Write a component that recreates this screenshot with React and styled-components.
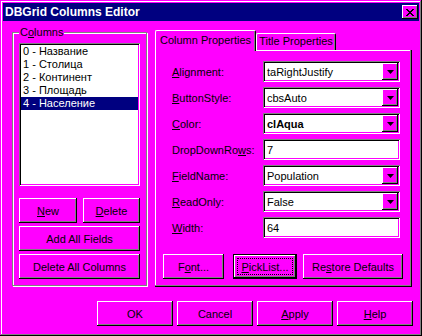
import React from 'react';
import styled, { createGlobalStyle, css } from 'styled-components';

const FACE = '#ff00ff';
const SHADOW = '#808080';
const FONT = '"Liberation Sans", Arial, sans-serif';

const Global = createGlobalStyle`
  html, body { margin: 0; padding: 0; background: ${FACE}; }
  body { font-family: ${FONT}; font-size: 11px; color: #000; }
  * { box-sizing: border-box; }
`;

const raised = css`
  box-shadow: inset -1px -1px 0 #000, inset 1px 1px 0 #fff, inset -2px -2px 0 ${SHADOW};
`;
const sunken = css`
  box-shadow: inset 1px 1px 0 ${SHADOW}, inset -1px -1px 0 #fff, inset 2px 2px 0 #000, inset -2px -2px 0 ${FACE};
`;

const Window = styled.div`
  width: 422px;
  height: 336px;
  background: ${FACE};
  padding: 3px;
  display: flex;
  flex-direction: column;
  box-shadow: inset -1px -1px 0 #000, inset 1px 1px 0 ${FACE}, inset -2px -2px 0 ${SHADOW}, inset 2px 2px 0 #fff;
`;

const TitleBar = styled.div`
  height: 18px;
  background: #000080;
  color: #fff;
  display: flex;
  align-items: center;
  justify-content: space-between;
  padding: 0 1px 0 2px;
`;

const TitleText = styled.span`
  font: bold 12px ${FONT};
  line-height: 18px;
`;

const CloseBtn = styled.div`
  width: 16px;
  height: 14px;
  background: ${FACE};
  display: flex;
  align-items: center;
  justify-content: center;
  ${raised}
`;

const Body = styled.div`
  flex: 1;
  padding: 5px 6px 0 9px;
  display: flex;
  flex-direction: column;
`;

const MainRow = styled.div`
  display: flex;
  align-items: flex-start;
  gap: 8px;
`;

const GroupBox = styled.div`
  position: relative;
  margin-top: 6px;
  width: 135px;
  height: 254px;
  border: 1px solid ${SHADOW};
  box-shadow: 1px 1px 0 #fff, inset 1px 1px 0 #fff;
  padding: 10px 6px 6px 6px;
  display: flex;
  flex-direction: column;
`;

const GroupLabel = styled.span`
  position: absolute;
  left: 6px;
  top: -8px;
  background: ${FACE};
  padding: 0 1px;
  line-height: 14px;
`;

const ListBox = styled.div`
  width: 121px;
  height: 143px;
  background: #fff;
  padding: 2px;
  ${sunken}
`;

const ListItem = styled.div`
  height: 13px;
  line-height: 13px;
  padding-left: 2px;
  white-space: nowrap;
  background: ${p => (p.$selected ? '#000080' : 'transparent')};
  color: ${p => (p.$selected ? '#fff' : '#000')};
`;

const ButtonStack = styled.div`
  margin-top: 12px;
  display: flex;
  flex-direction: column;
  gap: 3px;
`;

const ButtonPair = styled.div`
  display: flex;
  justify-content: space-between;
`;

const Button = styled.button`
  width: ${p => p.$w}px;
  height: 25px;
  margin: 0;
  padding: 0;
  border: none;
  background: ${FACE};
  font: 11px ${FONT};
  color: #000;
  display: flex;
  align-items: center;
  justify-content: center;
  ${raised}
  ${p =>
    p.$focused &&
    css`
      box-shadow: inset 0 0 0 1px #000, inset -2px -2px 0 #000, inset 2px 2px 0 #fff, inset -3px -3px 0 ${SHADOW};
    `}
`;

const FocusRing = styled.span`
  position: absolute;
  inset: 4px;
  border: 1px dotted #000;
  pointer-events: none;
`;

const FocusWrap = styled.span`
  position: relative;
  display: flex;
  align-items: center;
  justify-content: center;
  width: 100%;
  height: 100%;
`;

const Key = styled.span`
  text-decoration: underline;
  text-underline-offset: 1px;
`;

const TabControl = styled.div`
  margin-top: 4px;
  width: 257px;
  display: flex;
  flex-direction: column;
`;

const TabStrip = styled.div`
  display: flex;
  align-items: flex-end;
  height: 20px;
`;

const Tab = styled.div`
  position: relative;
  z-index: ${p => (p.$active ? 2 : 1)};
  width: ${p => p.$w}px;
  height: ${p => (p.$active ? 21 : 17)}px;
  margin-bottom: ${p => (p.$active ? -1 : 0)}px;
  background: ${FACE};
  border-top: 1px solid #fff;
  border-left: 1px solid #fff;
  border-right: 1px solid #000;
  border-radius: 2px 2px 0 0;
  box-shadow: inset -1px 0 0 ${SHADOW};
  text-align: center;
  padding-top: ${p => (p.$active ? 3 : 1)}px;
  line-height: 13px;
  white-space: nowrap;
`;

const Panel = styled.div`
  height: 237px;
  background: ${FACE};
  padding: 11px 0 0 8px;
  box-shadow: inset -1px -1px 0 #000, inset -2px -2px 0 ${SHADOW}, inset 1px 1px 0 #fff;
  display: flex;
  flex-direction: column;
`;

const FieldGrid = styled.div`
  display: grid;
  grid-template-columns: 91px 137px;
  grid-auto-rows: 21px;
  row-gap: 5px;
  padding-left: 9px;
  align-items: center;
`;

const FieldLabel = styled.span`
  white-space: nowrap;
`;

const Field = styled.div`
  width: 137px;
  height: 21px;
  background: #fff;
  padding: 2px;
  display: flex;
  align-items: center;
  ${sunken}
`;

const FieldText = styled.span`
  flex: 1;
  padding-left: 2px;
  font-weight: ${p => (p.$bold ? 'bold' : 'normal')};
  white-space: nowrap;
`;

const DropBtn = styled.div`
  width: 16px;
  height: 17px;
  background: ${FACE};
  display: flex;
  align-items: center;
  justify-content: center;
  ${raised}
`;

const PanelButtons = styled.div`
  margin-top: 16px;
  display: flex;
  align-items: center;
`;

const Spacer = styled.div`
  width: ${p => p.$w}px;
  flex: none;
`;

const Footer = styled.div`
  margin-top: 14px;
  display: flex;
  justify-content: flex-end;
  gap: 4px;
`;

const Arrow = () => (
  <svg width="7" height="4" viewBox="0 0 7 4">
    <polygon points="0,0 7,0 3.5,4" fill="#000" />
  </svg>
);

const CloseGlyph = () => (
  <svg width="8" height="7" viewBox="0 0 8 7" shapeRendering="crispEdges">
    <rect x="0" y="0" width="2" height="1" />
    <rect x="6" y="0" width="2" height="1" />
    <rect x="1" y="1" width="2" height="1" />
    <rect x="5" y="1" width="2" height="1" />
    <rect x="2" y="2" width="4" height="1" />
    <rect x="3" y="3" width="2" height="1" />
    <rect x="2" y="4" width="4" height="1" />
    <rect x="1" y="5" width="2" height="1" />
    <rect x="5" y="5" width="2" height="1" />
    <rect x="0" y="6" width="2" height="1" />
    <rect x="6" y="6" width="2" height="1" />
  </svg>
);

const columns = ['0 - Название', '1 - Столица', '2 - Континент', '3 - Площадь', '4 - Население'];

const fields = [
  { label: ['', 'A', 'lignment:'], value: 'taRightJustify', combo: true },
  { label: ['', 'B', 'uttonStyle:'], value: 'cbsAuto', combo: true },
  { label: ['', 'C', 'olor:'], value: 'clAqua', combo: true, bold: true },
  { label: ['DropDownRo', 'w', 's:'], value: '7' },
  { label: ['', 'F', 'ieldName:'], value: 'Population', combo: true },
  { label: ['', 'R', 'eadOnly:'], value: 'False', combo: true },
  { label: ['', 'W', 'idth:'], value: '64' },
];

export default function App() {
  return (
    <>
      <Global />
      <Window>
        <TitleBar>
          <TitleText>DBGrid Columns Editor</TitleText>
          <CloseBtn>
            <CloseGlyph />
          </CloseBtn>
        </TitleBar>
        <Body>
          <MainRow>
            <GroupBox>
              <GroupLabel>
                C<Key>o</Key>lumns
              </GroupLabel>
              <ListBox>
                {columns.map((c, i) => (
                  <ListItem key={c} $selected={i === 4}>
                    {c}
                  </ListItem>
                ))}
              </ListBox>
              <ButtonStack>
                <ButtonPair>
                  <Button $w={58}>
                    <Key>N</Key>ew
                  </Button>
                  <Button $w={57}>
                    <Key>D</Key>elete
                  </Button>
                </ButtonPair>
                <Button $w={121}>Add All Fields</Button>
                <Button $w={121}>Delete All Columns</Button>
              </ButtonStack>
            </GroupBox>
            <TabControl>
              <TabStrip>
                <Tab $active $w={101}>
                  Column Properties
                </Tab>
                <Tab $w={80}>Title Properties</Tab>
              </TabStrip>
              <Panel>
                <FieldGrid>
                  {fields.map(f => (
                    <React.Fragment key={f.value}>
                      <FieldLabel>
                        {f.label[0]}
                        <Key>{f.label[1]}</Key>
                        {f.label[2]}
                      </FieldLabel>
                      <Field>
                        <FieldText $bold={f.bold}>{f.value}</FieldText>
                        {f.combo && (
                          <DropBtn>
                            <Arrow />
                          </DropBtn>
                        )}
                      </Field>
                    </React.Fragment>
                  ))}
                </FieldGrid>
                <PanelButtons>
                  <Button $w={61}>
                    F<Key>o</Key>nt...
                  </Button>
                  <Spacer $w={9} />
                  <Button $w={64} $focused>
                    <FocusWrap>
                      <FocusRing />
                      <span>
                        <Key>P</Key>ickList...
                      </span>
                    </FocusWrap>
                  </Button>
                  <Spacer $w={6} />
                  <Button $w={100}>
                    Re<Key>s</Key>tore Defaults
                  </Button>
                </PanelButtons>
              </Panel>
            </TabControl>
          </MainRow>
          <Footer>
            <Button $w={76}>OK</Button>
            <Button $w={76}>Cancel</Button>
            <Button $w={76}>
              <Key>A</Key>pply
            </Button>
            <Button $w={76}>
              <Key>H</Key>elp
            </Button>
          </Footer>
        </Body>
      </Window>
    </>
  );
}
